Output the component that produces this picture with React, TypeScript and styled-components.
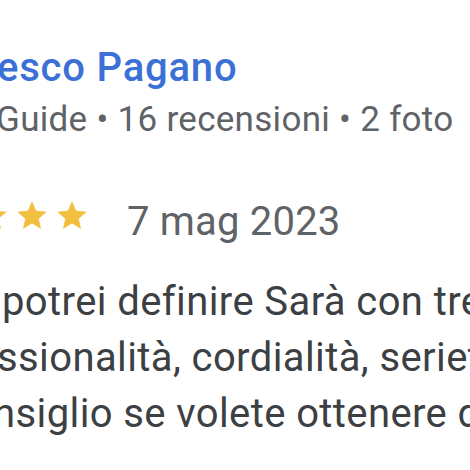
import styled, { createGlobalStyle } from 'styled-components';

const GlobalStyle = createGlobalStyle`
  html, body {
    margin: 0;
    padding: 0;
    background: #ffffff;
  }
  body {
    font-family: Roboto, "Noto Sans", Arial, sans-serif;
    -webkit-font-smoothing: antialiased;
  }
`;

function Star() {
  return (
    <svg width="34" height="33" viewBox="0 0 24 24" aria-hidden="true">
      <path
        fill="#f3bf3f"
        d="M12 1.6l3.06 7.02 7.62.68-5.77 5.02 1.7 7.46L12 17.9l-6.6 3.88 1.7-7.46L1.32 9.3l7.62-.68z"
      />
    </svg>
  );
}

function App() {
  return (
    <>
      <GlobalStyle />
      <Viewport>
        <ReviewCard>
          <AuthorName>esco Pagano</AuthorName>
          <AuthorMeta>Guide • 16 recensioni • 2 foto</AuthorMeta>
          <RatingRow>
            <Stars>
              <Star />
              <Star />
              <Star />
            </Stars>
            <ReviewDate>7 mag 2023</ReviewDate>
          </RatingRow>
          <ReviewBody>
            <BodyLine $shift={2}>potrei definire Sarà con tre parole:</BodyLine>
            <BodyLine $shift={-3}>ssionalità, cordialità, serietà.</BodyLine>
            <BodyLine $shift={-7}>nsiglio se volete ottenere dei risultati</BodyLine>
          </ReviewBody>
        </ReviewCard>
      </Viewport>
    </>
  );
}

const Viewport = styled.div`
  width: 470px;
  height: 470px;
  overflow: hidden;
  background: #ffffff;
`;

const ReviewCard = styled.div`
  padding-top: 46px;
  display: flex;
  flex-direction: column;
`;

const AuthorName = styled.div`
  color: #3b71d6;
  font-size: 40px;
  font-weight: 500;
  line-height: 44px;
  letter-spacing: 0.8px;
  white-space: nowrap;
  margin-left: -3px;
`;

const AuthorMeta = styled.div`
  margin-top: 10px;
  color: #5f6368;
  font-size: 35px;
  line-height: 40px;
  letter-spacing: 0.3px;
  white-space: nowrap;
  margin-left: -4px;
`;

const RatingRow = styled.div`
  margin-top: 59px;
  display: flex;
  align-items: flex-start;
  gap: 38px;
`;

const Stars = styled.div`
  display: flex;
  gap: 6px;
  margin-left: -25px;

  svg {
    display: block;
  }
`;

const ReviewDate = styled.div`
  color: #5f6368;
  font-size: 40px;
  line-height: 46px;
  letter-spacing: 0.2px;
  white-space: nowrap;
`;

const ReviewBody = styled.div`
  margin-top: 29px;
  color: #3c4043;
  font-size: 40px;
  line-height: 56px;
  letter-spacing: 0.4px;
`;

const BodyLine = styled.div<{ $shift: number }>`
  white-space: nowrap;
  margin-left: ${(p) => p.$shift}px;
`;

export default App;
